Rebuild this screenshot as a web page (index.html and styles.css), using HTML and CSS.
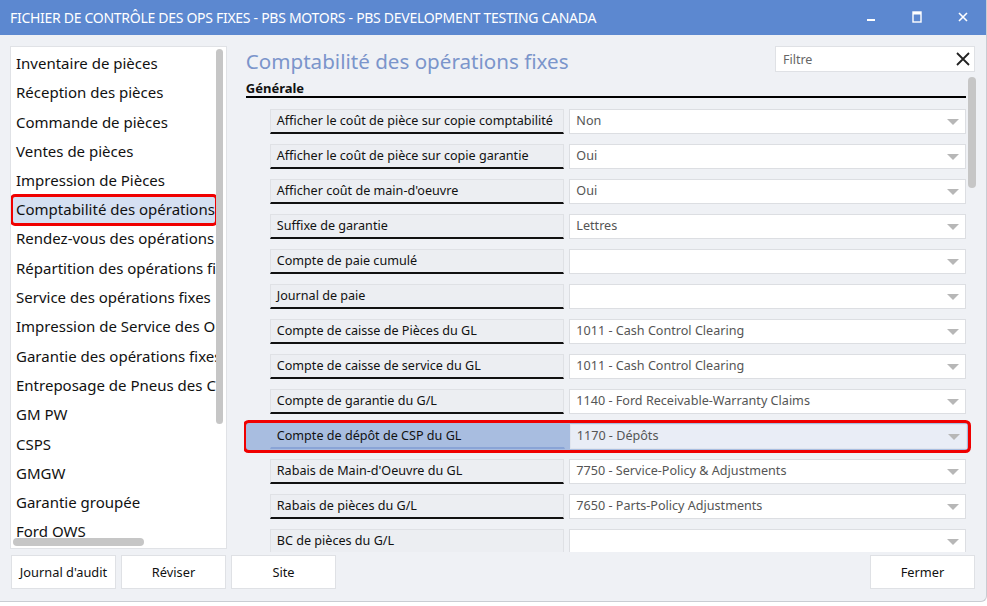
FILE: index.html
```html
<!DOCTYPE html>
<html lang="fr">
<head>
<meta charset="utf-8">
<title>Fichier de contrôle des OPS fixes</title>
<link rel="stylesheet" href="styles.css">
</head>
<body>
<div class="window">
  <header class="titlebar">
    <div class="title">FICHIER DE CONTRÔLE DES OPS FIXES - PBS MOTORS - PBS DEVELOPMENT TESTING CANADA</div>
    <div class="controls">
      <span class="ctl"><svg width="10" height="10" viewBox="0 0 10 10"><rect x="1" y="7" width="8" height="2" fill="#fff"/></svg></span>
      <span class="ctl"><svg width="10" height="12" viewBox="0 0 10 12"><rect x="1" y="1" width="8" height="10" fill="none" stroke="#fff" stroke-width="1.4"/><rect x="1" y="1" width="8" height="2.5" fill="#fff"/></svg></span>
      <span class="ctl"><svg width="12" height="12" viewBox="0 0 12 12"><path d="M2 2 L10 10 M10 2 L2 10" stroke="#fff" stroke-width="1.6"/></svg></span>
    </div>
  </header>
  <main class="body">
    <section class="sidebar">
      <ul class="navlist">
        <li>Inventaire de pièces</li>
        <li>Réception des pièces</li>
        <li>Commande de pièces</li>
        <li>Ventes de pièces</li>
        <li>Impression de Pièces</li>
        <li class="selected">Comptabilité des opérations fixes</li>
        <li>Rendez-vous des opérations fixes</li>
        <li>Répartition des opérations fixes</li>
        <li>Service des opérations fixes</li>
        <li>Impression de Service des Opérations</li>
        <li>Garantie des opérations fixes</li>
        <li>Entreposage de Pneus des Clients</li>
        <li>GM PW</li>
        <li>CSPS</li>
        <li>GMGW</li>
        <li>Garantie groupée</li>
        <li>Ford OWS</li>
      </ul>
      <div class="vbar"></div>
      <div class="hbar"></div>
    </section>
    <section class="panel">
      <div class="panel-head">
        <h1 class="heading">Comptabilité des opérations fixes</h1>
        <div class="filter">
          <span class="placeholder">Filtre</span>
          <svg class="clear" width="16" height="16" viewBox="0 0 16 16"><path d="M2 2 L14 14 M14 2 L2 14" stroke="#222" stroke-width="1.8"/></svg>
        </div>
      </div>
      <div class="scroll">
        <div class="section-title">Générale</div>
        <div class="rows">
          <div class="row"><div class="label">Afficher le coût de pièce sur copie comptabilité</div><div class="value">Non<i class="tri"></i></div></div>
          <div class="row"><div class="label">Afficher le coût de pièce sur copie garantie</div><div class="value">Oui<i class="tri"></i></div></div>
          <div class="row"><div class="label">Afficher coût de main-d'oeuvre</div><div class="value">Oui<i class="tri"></i></div></div>
          <div class="row"><div class="label">Suffixe de garantie</div><div class="value">Lettres<i class="tri"></i></div></div>
          <div class="row"><div class="label">Compte de paie cumulé</div><div class="value"><i class="tri"></i></div></div>
          <div class="row"><div class="label">Journal de paie</div><div class="value"><i class="tri"></i></div></div>
          <div class="row"><div class="label">Compte de caisse de Pièces du GL</div><div class="value">1011 - Cash Control Clearing<i class="tri"></i></div></div>
          <div class="row"><div class="label">Compte de caisse de service du GL</div><div class="value">1011 - Cash Control Clearing<i class="tri"></i></div></div>
          <div class="row"><div class="label">Compte de garantie du G/L</div><div class="value">1140 - Ford Receivable-Warranty Claims<i class="tri"></i></div></div>
          <div class="row active"><div class="label">Compte de dépôt de CSP du GL</div><div class="value">1170 - Dépôts<i class="tri"></i></div></div>
          <div class="row"><div class="label">Rabais de Main-d'Oeuvre du GL</div><div class="value">7750 - Service-Policy &amp; Adjustments<i class="tri"></i></div></div>
          <div class="row"><div class="label">Rabais de pièces du G/L</div><div class="value">7650 - Parts-Policy Adjustments<i class="tri"></i></div></div>
          <div class="row"><div class="label">BC de pièces du G/L</div><div class="value"><i class="tri"></i></div></div>
        </div>
        <div class="rbar"></div>
      </div>
    </section>
  </main>
  <footer class="footer">
    <button class="btn">Journal d'audit</button>
    <button class="btn">Réviser</button>
    <button class="btn">Site</button>
    <span class="spacer"></span>
    <button class="btn">Fermer</button>
  </footer>
</div>
</body>
</html>
```
FILE: styles.css
```css
* { box-sizing: border-box; }
html, body { margin: 0; padding: 0; }
body {
  width: 987px;
  height: 606px;
  overflow: hidden;
  background: #ffffff;
  font-family: "Noto Sans", "Open Sans", sans-serif;
  color: #111;
}
.window {
  width: 987px;
  height: 602px;
  background: #eff1f5;
  border-bottom: 1px solid #c9ccd2;
  border-right: 1px solid #c9ccd2;
  border-bottom-right-radius: 6px;
  display: flex;
  flex-direction: column;
}
.titlebar {
  height: 35px;
  flex: none;
  background: #5c88d0;
  color: #fff;
  display: flex;
  align-items: center;
  padding-left: 10px;
  padding-bottom: 1px;
}
.title {
  font-size: 14px;
  letter-spacing: -0.29px;
  white-space: nowrap;
  flex: 1;
}
.controls { display: flex; align-items: center; }
.ctl {
  width: 46px;
  display: flex;
  justify-content: center;
  align-items: center;
}
.body {
  flex: none;
  height: 517px;
  display: flex;
  padding: 11px 10px 0 10px;
  gap: 17px;
}
.sidebar {
  position: relative;
  width: 217px;
  height: 503px;
  background: #fff;
  border: 1px solid #e0e2e6;
  overflow: hidden;
}
.navlist {
  list-style: none;
  margin: 0;
  padding: 2px 0 0 0;
  width: 208px;
  overflow: hidden;
}
.navlist li {
  height: 29.3px;
  line-height: 29.3px;
  padding-left: 5px;
  font-size: 15px;
  white-space: nowrap;
  overflow: hidden;
  color: #111;
}
.navlist li.selected {
  background: #d5e0f2;
  border: 3px solid #f00000;
  border-radius: 5px;
  line-height: 25px;
  padding-left: 3px;
  margin-left: -1px;
  width: 208px;
  height: 32px;
  margin-top: -1px;
  margin-bottom: -2px;
}
.vbar {
  position: absolute;
  right: 3px;
  top: 2px;
  width: 7px;
  height: 375px;
  border-radius: 4px;
  background: #c6c6c6;
}
.hbar {
  position: absolute;
  left: 2px;
  bottom: 2px;
  width: 131px;
  height: 8px;
  border-radius: 4px;
  background: #c6c6c6;
}
.panel {
  width: 733px;
  display: flex;
  flex-direction: column;
}
.panel-head {
  height: 31px;
  display: flex;
  align-items: flex-start;
  justify-content: space-between;
}
.heading {
  margin: 0;
  padding-left: 2px;
  font-weight: normal;
  font-size: 20.6px;
  line-height: 30px;
  color: #7b95cb;
  white-space: nowrap;
}
.filter {
  width: 200px;
  height: 26px;
  background: #fff;
  border: 1px solid #dfe1e5;
  display: flex;
  align-items: center;
  justify-content: space-between;
  padding: 0 3px 0 7px;
  margin-right: 1px;
}
.placeholder { font-size: 12.5px; color: #666; }
.clear { display: block; }
.scroll {
  position: relative;
  height: 475px;
  overflow: hidden;
}
.section-title {
  margin: 3px 10px 0 2px;
  font-weight: bold;
  font-size: 13px;
  line-height: 17px;
  border-bottom: 2px solid #000;
  height: 18px;
}
.rows {
  padding-top: 11px;
  width: 722px;
}
.row {
  display: flex;
  height: 25px;
  margin-bottom: 10px;
  padding-left: 26px;
  gap: 5px;
}
.label {
  width: 295px;
  height: 25px;
  background: #eceef2;
  border: 1px solid #dfe1e5;
  border-bottom: 2px solid #111;
  font-size: 12.6px;
  line-height: 22px;
  padding-left: 6px;
  white-space: nowrap;
  overflow: hidden;
}
.value {
  position: relative;
  width: 397px;
  height: 25px;
  background: #fff;
  border: 1px solid #dcdee2;
  font-size: 12.6px;
  line-height: 22px;
  padding-left: 6px;
  color: #555;
  white-space: nowrap;
}
.tri {
  position: absolute;
  right: 6px;
  top: 9px;
  width: 0;
  height: 0;
  border-left: 6px solid transparent;
  border-right: 6px solid transparent;
  border-top: 6px solid #b7b7b7;
}
.row.active {
  background: #a8bde0;
  border-radius: 2px;
  box-shadow: 0 0 0 1px #a8bde0, 0 0 0 4px #f00000;
  width: 720px;
  margin-left: 3px;
  padding-left: 23px;
}
.row.active .label {
  background: #a8bde0;
  border-color: #a8bde0;
  border-bottom: 2px solid #8aa4d6;
}
.row.active .value {
  background: #e9edf6;
  border-color: #e1e5ee;
}
.rbar {
  position: absolute;
  right: 0;
  top: 0;
  width: 8px;
  height: 111px;
  border-radius: 4px;
  background: #c6c6c6;
}
.footer {
  flex: none;
  height: 40px;
  display: flex;
  align-items: flex-start;
  padding: 3px 11px 0 11px;
  gap: 5px;
}
.spacer { flex: 1; }
.btn {
  width: 105px;
  height: 34px;
  background: #fff;
  border: 1px solid #dfe1e5;
  font-family: "Noto Sans", "Open Sans", sans-serif;
  font-size: 12.8px;
  color: #111;
  padding: 0;
}
```
